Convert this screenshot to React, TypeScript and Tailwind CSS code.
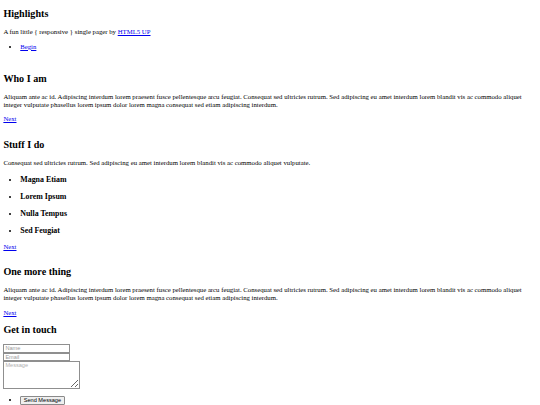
import React from 'react'

const Para = ({ children }: { children: React.ReactNode }) => (
  <p className="my-[6.75px]">{children}</p>
)

const Next = () => (
  <div>
    <a href="#" className="text-[#0000ee] underline">Next</a>
  </div>
)

const lorem =
  'Aliquam ante ac id. Adipiscing interdum lorem praesent fusce pellentesque arcu feugiat. Consequat sed ultricies rutrum. Sed adipiscing eu amet interdum lorem blandit vis ac commodo aliquet integer vulputate phasellus lorem ipsum dolor lorem magna consequat sed etiam adipiscing interdum.'

const App = () => {
  const [name, setName] = React.useState('')
  const [email, setEmail] = React.useState('')
  const [message, setMessage] = React.useState('')

  const things = ['Magna Etiam', 'Lorem Ipsum', 'Nulla Tempus', 'Sed Feugiat']

  return (
    <div className="px-[3.375px] bg-white text-black font-['Liberation_Serif',serif] text-[6.75px] leading-[7.76px]">
      {/* header */}
      <h2 className="mt-[8.4px] mb-[8.4px] text-[10.125px] leading-[11.64px] font-bold">Highlights</h2>
      <Para>
        A fun little {'{'} responsive {'}'} single pager by{' '}
        <a href="#" className="text-[#0000ee] underline">HTML5 UP</a>
      </Para>
      <ul className="my-[6.75px] pl-[16.875px] list-disc">
        <li>
          <a href="#" className="text-[#0000ee] underline">Begin</a>
        </li>
      </ul>

      <h2 className="mt-[22.3px] mb-[8.4px] text-[10.125px] leading-[11.64px] font-bold">Who I am</h2>
      <Para>{lorem}</Para>
      <Next />

      <h2 className="mt-[16px] mb-[8.4px] text-[10.125px] leading-[11.64px] font-bold">Stuff I do</h2>
      <Para>Consequat sed ultricies rutrum. Sed adipiscing eu amet interdum lorem blandit vis ac commodo aliquet vulputate.</Para>
      <ul className="my-[6.75px] pl-[16.875px] list-disc">
        {things.map((t) => (
          <li key={t}>
            <h3 className="my-[7.9px] text-[7.9px] leading-[9.07px] font-bold">{t}</h3>
          </li>
        ))}
      </ul>
      <Next />

      <h2 className="mt-[16px] mb-[8.4px] text-[10.125px] leading-[11.64px] font-bold">One more thing</h2>
      <Para>{lorem}</Para>
      <Next />

      <h2 className="mt-[7.6px] mb-[8.4px] text-[10.125px] leading-[11.64px] font-bold">Get in touch</h2>
      <form className="flex flex-col items-start font-['Liberation_Sans',sans-serif] text-[5.6px]" onSubmit={(e) => e.preventDefault()}>
        <input
          className="w-[67px] h-[8.5px] px-[1px] border border-[#8f8f8f] placeholder:text-[#9a9a9a]"
          placeholder="Name"
          value={name}
          onChange={(e) => setName(e.target.value)}
        />
        <input
          className="w-[67px] h-[8.5px] px-[1px] border border-[#8f8f8f] placeholder:text-[#9a9a9a]"
          placeholder="Email"
          value={email}
          onChange={(e) => setEmail(e.target.value)}
        />
        <textarea
          className="w-[77px] h-[28px] px-[1px] border border-[#8f8f8f] placeholder:text-[#b0b0b0]"
          placeholder="Message"
          value={message}
          onChange={(e) => setMessage(e.target.value)}
        ></textarea>
        <ul className="my-[6.75px] pl-[16.875px] list-disc font-['Liberation_Serif',serif] text-[6.75px]">
          <li>
            <button
              type="submit"
              className="px-[2.5px] h-[9px] bg-[#efefef] border border-[#8a8a8a] rounded-[1px] font-['Liberation_Sans',sans-serif] text-[5.6px]"
            >
              Send Message
            </button>
          </li>
        </ul>
      </form>
    </div>
  )
}

export default App
